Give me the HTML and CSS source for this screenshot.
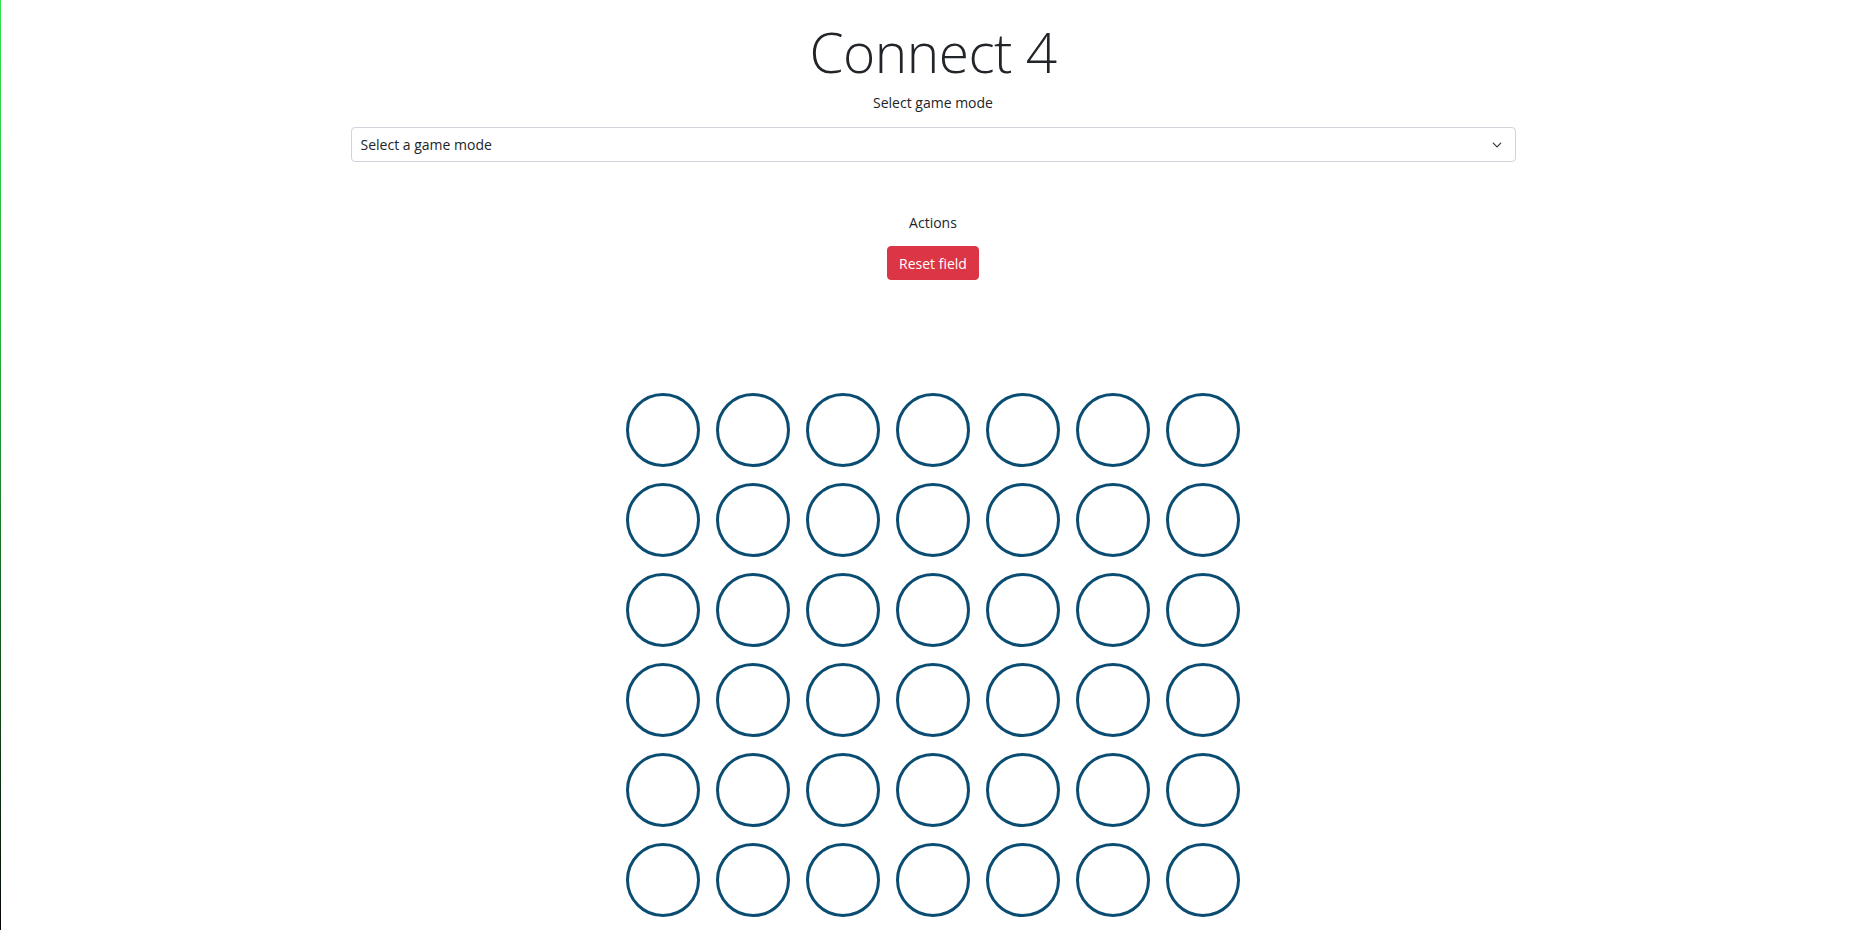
FILE: index.html
```html
<!DOCTYPE html>
<html lang="en">
<head>
<meta charset="utf-8">
<title>Connect 4</title>
<link rel="stylesheet" href="styles.css">
</head>
<body>
<div class="edge"></div>
<main class="app">
  <h1 class="title">Connect 4</h1>
  <label class="label" for="mode">Select game mode</label>
  <div class="select-wrap">
    <div class="select" id="mode">
      <span>Select a game mode</span>
      <svg class="chev" width="16" height="12" viewBox="0 0 16 16"><path d="M2 5l6 6 6-6" fill="none" stroke="#343a40" stroke-width="2" stroke-linecap="round" stroke-linejoin="round"/></svg>
    </div>
  </div>
  <div class="actions">
    <div class="label">Actions</div>
    <button class="btn-danger">Reset field</button>
  </div>
  <div class="board">
    <div class="cell"></div><div class="cell"></div><div class="cell"></div><div class="cell"></div><div class="cell"></div><div class="cell"></div><div class="cell"></div>
    <div class="cell"></div><div class="cell"></div><div class="cell"></div><div class="cell"></div><div class="cell"></div><div class="cell"></div><div class="cell"></div>
    <div class="cell"></div><div class="cell"></div><div class="cell"></div><div class="cell"></div><div class="cell"></div><div class="cell"></div><div class="cell"></div>
    <div class="cell"></div><div class="cell"></div><div class="cell"></div><div class="cell"></div><div class="cell"></div><div class="cell"></div><div class="cell"></div>
    <div class="cell"></div><div class="cell"></div><div class="cell"></div><div class="cell"></div><div class="cell"></div><div class="cell"></div><div class="cell"></div>
    <div class="cell"></div><div class="cell"></div><div class="cell"></div><div class="cell"></div><div class="cell"></div><div class="cell"></div><div class="cell"></div>
  </div>
</main>
</body>
</html>
```

FILE: styles.css
```css
html, body {
  margin: 0;
  padding: 0;
  background: #fff;
}
body {
  font-family: "Open Sans", "Noto Sans", sans-serif;
  font-size: 14px;
  line-height: 1.5;
  color: #212529;
  padding-left: 3px;
  overflow: hidden;
  height: 930px;
}
.edge {
  position: fixed;
  left: 0;
  top: 0;
  width: 1px;
  height: 100%;
  background: linear-gradient(#2fe34c, #23b43c 35%, #0e4a17 75%, #050505);
}
.app {
  display: flex;
  flex-direction: column;
  align-items: center;
}
.title {
  font-size: 55px;
  font-weight: 300;
  line-height: 1.2;
  margin: 19px 0 7px;
  letter-spacing: -0.5px;
}
.label {
  display: block;
  font-size: 14px;
  margin-top: 0;
}
.select-wrap {
  width: 1165px;
  margin-top: 14px;
}
.select {
  display: flex;
  align-items: center;
  justify-content: space-between;
  height: 35px;
  box-sizing: border-box;
  padding: 0 12px 0 9px;
  border: 1px solid #ced4da;
  border-radius: 4px;
  font-size: 14px;
  text-align: left;
}
.chev {
  width: 12px;
  height: 10px;
}
.actions {
  display: flex;
  flex-direction: column;
  align-items: center;
  margin-top: 50px;
}
.btn-danger {
  margin-top: 13px;
  height: 34px;
  padding: 0 11px;
  background: #dc3545;
  color: #fff;
  border: 1px solid #dc3545;
  border-radius: 4px;
  font-family: inherit;
  font-size: 14px;
}
.board {
  display: grid;
  grid-template-columns: repeat(7, 74px);
  grid-auto-rows: 74px;
  gap: 16px;
  margin-top: 113px;
}
.cell {
  box-sizing: border-box;
  border: 3px solid #0b4d72;
  border-radius: 50%;
}
```
